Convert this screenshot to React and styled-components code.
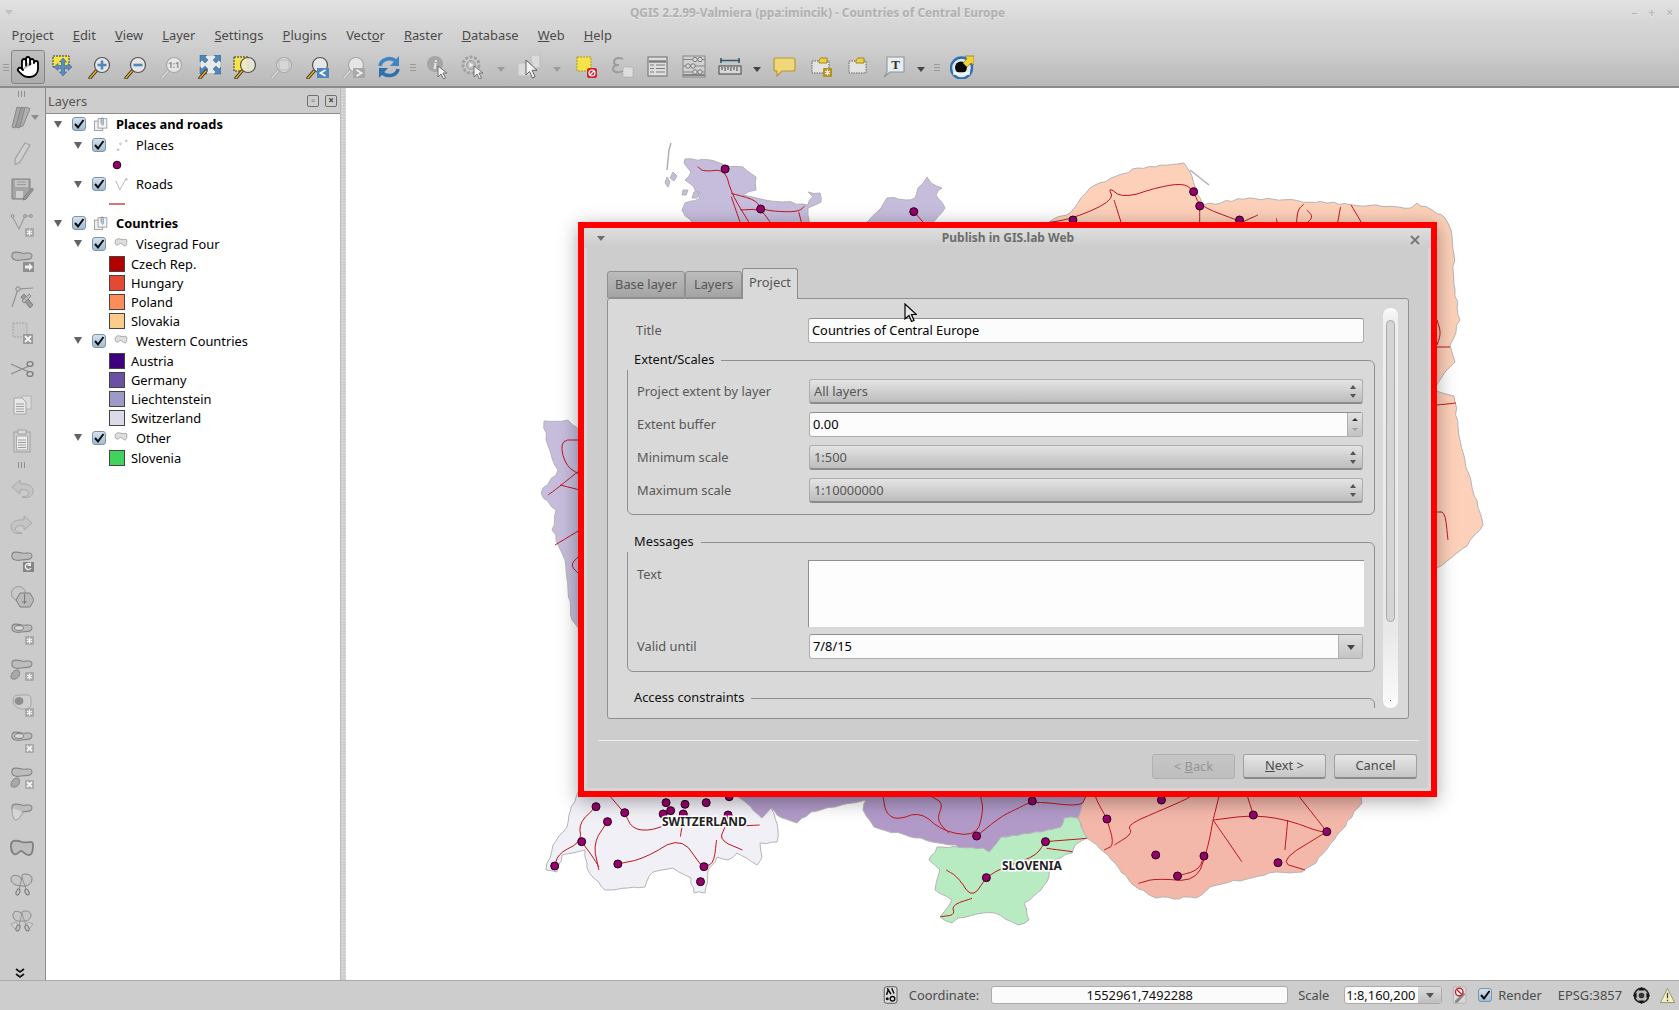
import React from "react"
import styled, { createGlobalStyle } from "styled-components"
import { Hand } from "lucide-react"

const GlobalStyle = createGlobalStyle`
  html, body { margin: 0; padding: 0; background: #fff; overflow: hidden; }
  body { font-family: "Noto Sans", "Open Sans", sans-serif; font-size: 12.85px; }
`

/* ---------- icons ---------- */
const Svg = styled.svg`
  width: ${(p) => p.$s || 24}px;
  height: ${(p) => p.$s || 24}px;
  display: block;
  flex: none;
`
const Icon = ({ s, children }) => <Svg $s={s} viewBox="0 0 24 24">{children}</Svg>

function SvgLabel({ children, fontFamily = "Noto Sans", ...rest }) {
  return (
    <text textAnchor="middle" fontFamily={fontFamily} {...rest}>
      {children}
    </text>
  )
}

const Lens = ({ dim, fill = "#e6e6e6" }) => (
  <>
    <line x1="9" y1="16" x2="3" y2="23" stroke={dim ? "#a8a8a8" : "#222"} strokeWidth="3.2" strokeLinecap="round" />
    <line x1="9" y1="16" x2="3" y2="23" stroke={dim ? "#dcdcdc" : "#f0b020"} strokeWidth="1.6" strokeLinecap="round" />
    <circle cx="15" cy="10" r="7.5" fill={fill} stroke={dim ? "#a8a8a8" : "#555"} strokeWidth="1.2" />
  </>
)
const Star = ({ x = 15, y = 15, bg = "#a9a9a9" }) => (
  <>
    <rect x={x} y={y} width="9" height="9" rx="1" fill={bg} />
    <path d={`M${x + 4.5} ${y + 1.5}v6M${x + 2} ${y + 3}l5 3M${x + 7} ${y + 3}l-5 3`} stroke="#f4f4f4" strokeWidth="1.2" />
  </>
)
const Cross = ({ x = 15, y = 15 }) => (
  <>
    <rect x={x} y={y} width="9" height="9" rx="1" fill="#a9a9a9" />
    <path d={`M${x + 2} ${y + 2}l5 5M${x + 7} ${y + 2}l-5 5`} stroke="#f4f4f4" strokeWidth="1.8" />
  </>
)
const Pointer = () => (
  <path d="M13 11l0 11 3-3 2.5 5 2-1-2.5-5 4 0z" fill="#f2f2f2" stroke="#666" strokeWidth="0.9" />
)
const Blob = ({ d = "M2 6C2 2 8 3 12 4S22 2 22 7 15 10 11 11 1 11 2 6Z" }) => (
  <path d={d} fill="#bdbdbd" stroke="#858585" strokeWidth="1.1" />
)

const icons = {
  panSel: (
    <>
      <rect x="2" y="1" width="16" height="11" fill="#f6e34a" stroke="#333" strokeWidth="1" strokeDasharray="2 1" />
      <path d="M12 3l3.5 4h-2v3.5h3.5v-2l4 3.5-4 3.5v-2h-3.5v3.5h2l-3.5 4-3.5-4h2v-3.5H7v2L3 12l4-3.5v2h3.5V7h-2z" fill="#5b8dbd" stroke="#37628c" strokeWidth="0.6" />
    </>
  ),
  zoomIn: (
    <>
      <Lens />
      <path d="M15 5.5v9M10.5 10h9" stroke="#4f86bb" strokeWidth="2.6" />
    </>
  ),
  zoomOut: (
    <>
      <Lens />
      <path d="M10.5 10h9" stroke="#4f86bb" strokeWidth="2.6" />
    </>
  ),
  zoomOne: (
    <>
      <Lens dim />
      <SvgLabel x="15" y="13" fill="#8b8b8b" fontSize="8" fontWeight="700">1:1</SvgLabel>
    </>
  ),
  zoomFull: (
    <>
      <rect x="4" y="1" width="19" height="17" fill="#e9e9e9" />
      <path d="M3 0h7L8 2l3 3-3 3-3-3-2 2zM24 0v7l-2-2-3 3-3-3 3-3-2-2zM24 19h-7l2-2-3-3 3-3 3 3 2-2zM3 19v-7l2 2 3-3 3 3-3 3 2 2z" fill="#4f86bb" stroke="#2f5f8c" strokeWidth="0.5" />
      <line x1="9" y1="16" x2="3" y2="23" stroke="#222" strokeWidth="3.2" strokeLinecap="round" />
      <line x1="9" y1="16" x2="3" y2="23" stroke="#f0b020" strokeWidth="1.6" strokeLinecap="round" />
    </>
  ),
  zoomSel: (
    <>
      <rect x="1" y="2" width="14" height="14" fill="#f6e34a" stroke="#333" strokeWidth="1" strokeDasharray="2 1" />
      <Lens fill="rgba(235,235,215,0.85)" />
    </>
  ),
  zoomLayer: (
    <>
      <Lens dim fill="rgba(230,230,230,0.85)" />
      <rect x="10" y="5" width="10" height="10" fill="#d6d6d6" stroke="#b5b5b5" />
    </>
  ),
  zoomLast: (
    <>
      <Lens />
      <rect x="12" y="13" width="12" height="10" fill="#4f86bb" />
      <path d="M20.5 15l-5 3 5 3" stroke="#fff" strokeWidth="1.8" fill="none" />
    </>
  ),
  zoomNext: (
    <>
      <Lens dim />
      <rect x="12" y="13" width="12" height="10" fill="#a8a8a8" />
      <path d="M15.5 15l5 3-5 3" stroke="#f0f0f0" strokeWidth="1.8" fill="none" />
    </>
  ),
  refresh: (
    <>
      <path d="M3 11C4 5 12 1 19 6" stroke="#3f85c4" strokeWidth="3.6" fill="none" />
      <path d="M22 1v10H13z" fill="#3f85c4" />
      <path d="M21 14C20 20 12 23 5 18" stroke="#2f6fae" strokeWidth="3.6" fill="none" />
      <path d="M2 23V13h9z" fill="#2f6fae" />
    </>
  ),
  identify: (
    <>
      <circle cx="10" cy="9" r="8" fill="#a5a5a5" />
      <SvgLabel x="10" y="14" fill="#eee" fontSize="13" fontWeight="700" fontStyle="italic" fontFamily="Liberation Serif">i</SvgLabel>
      <Pointer />
    </>
  ),
  action: (
    <>
      <circle cx="10" cy="10" r="8" fill="#cfcfcf" stroke="#a0a0a0" strokeWidth="3" strokeDasharray="3 1.5" />
      <circle cx="10" cy="10" r="4.5" fill="#bdbdbd" stroke="#999" />
      <path d="M8.5 7.5l4 2.5-4 2.5z" fill="#f0f0f0" />
      <Pointer />
    </>
  ),
  select: (
    <>
      <rect x="13" y="0" width="9" height="13" fill="#dadada" stroke="#bbb" />
      <rect x="0" y="8" width="14" height="13" fill="#dadada" stroke="#bbb" />
      <path d="M8 5l0 15 3.5-3.5 3 6.5 2.6-1.2-3-6.5 5 0z" fill="#f2f2f2" stroke="#555" strokeWidth="0.9" />
    </>
  ),
  deselect: (
    <>
      <rect x="3" y="2" width="14" height="14" fill="#f6e34a" stroke="#a89a20" strokeDasharray="2 1" />
      <rect x="13" y="13" width="10" height="10" rx="2" fill="#d4202a" />
      <circle cx="18" cy="18" r="3" fill="none" stroke="#fff" strokeWidth="1.2" />
      <path d="M16 20l4-4" stroke="#fff" strokeWidth="1.2" />
    </>
  ),
  expression: (
    <>
      <path d="M13 4C9 2 4 3 4 7c0 2 2 3 5 3-4 0-6 1-6 4 0 4 6 4 10 2" fill="none" stroke="#9a9a9a" strokeWidth="1.9" />
      <rect x="13" y="12" width="10" height="10" fill="#dedede" stroke="#aaa" strokeDasharray="1.5 1" />
    </>
  ),
  table: (
    <>
      <rect x="2" y="2" width="19" height="19" fill="#dedede" stroke="#7c7c7c" strokeWidth="1.2" />
      <path d="M3 6.5h17" stroke="#7c7c7c" strokeWidth="2.4" />
      <path d="M4 10h4M10 10h9M4 13.5h4M10 13.5h9M4 17h4M10 17h9" stroke="#7c7c7c" strokeWidth="1.1" />
    </>
  ),
  stats: (
    <>
      <rect x="1" y="1" width="22" height="21" fill="#d0d0d0" stroke="#858585" />
      <path d="M1 20h22" stroke="#858585" strokeWidth="2" />
      <path d="M1 4.5h22M1 11h22M1 17h22" stroke="#858585" />
      <circle cx="13" cy="4.5" r="2.2" fill="#ddd" stroke="#777" />
      <circle cx="18" cy="4.5" r="2.2" fill="#ddd" stroke="#777" />
      <circle cx="6" cy="11" r="2.2" fill="#ddd" stroke="#777" />
      <circle cx="11" cy="11" r="2.2" fill="#ddd" stroke="#777" />
      <circle cx="13" cy="17" r="2.2" fill="#ddd" stroke="#777" />
      <circle cx="18" cy="17" r="2.2" fill="#ddd" stroke="#777" />
    </>
  ),
  measure: (
    <>
      <path d="M2 5.5h20M3 3v5M21 3v5" stroke="#31566f" strokeWidth="1.5" />
      <rect x="1" y="11" width="22" height="8" fill="#d8d8d8" stroke="#444" />
      <path d="M4 12v3M7 12v4M10 12v3M13 12v4M16 12v3M19 12v4" stroke="#444" />
    </>
  ),
  tips: (
    <path d="M4 3h17q2 0 2 2v9q0 2-2 2H10l-5 5v-5H4q-2 0-2-2V5q0-2 2-2z" fill="#f0d878" stroke="#b89a30" strokeWidth="1.2" />
  ),
  annotNew: (
    <>
      <rect x="2" y="6" width="17" height="12" fill="#e3e3e3" stroke="#666" strokeDasharray="1.5 1" />
      <path d="M11 3h6v5h-8V5z" fill="#f0d040" stroke="#a08820" />
      <Star x={13} y={13} bg="#b8901c" />
    </>
  ),
  annotMove: (
    <>
      <rect x="3" y="6" width="17" height="12" fill="#e3e3e3" stroke="#666" strokeDasharray="1.5 1" />
      <path d="M12 3h6v5h-8V5z" fill="#f0d040" stroke="#a08820" />
    </>
  ),
  textAnnot: (
    <>
      <path d="M5 2h17v15H8l-6 5 3-5z" fill="#e6ecef" stroke="#8a979d" strokeWidth="1.1" />
      <SvgLabel x="13.5" y="14" fill="#333" fontSize="13" fontFamily="Liberation Serif" fontWeight="700">T</SvgLabel>
    </>
  ),
  gislab: (
    <>
      <circle cx="11.5" cy="13" r="10.5" fill="#dfe9f2" stroke="#2f6fb0" strokeWidth="2.4" />
      <circle cx="11" cy="12.5" r="6" fill="#0a0a0a" />
      <rect x="3" y="17" width="17" height="3" fill="#fff" opacity="0.7" />
      <path d="M15 1h9v9l-3-2-4 4-4-4 4-4z" fill="#f2d23c" stroke="#8a7416" strokeWidth="0.7" />
    </>
  ),

  /* side toolbar */
  pencils: (
    <>
      <path d="M7 2l5 1.5L5 23 2 22z" fill="#a8a8a8" stroke="#8a8a8a" />
      <path d="M11 2l5 1.5L9 23 6 22z" fill="#a0a0a0" stroke="#848484" />
      <path d="M15 2l5 1.5L13 21 10 22z" fill="#b0b0b0" stroke="#8a8a8a" />
    </>
  ),
  pencil: <path d="M15 2l5 2-10 17-5 3 0-6z" fill="#cfcfcf" stroke="#a2a2a2" strokeWidth="1.2" />,
  save: (
    <>
      <path d="M2 2h18v14l-4 6H2z" fill="#a5a5a5" stroke="#808080" />
      <rect x="5" y="3" width="13" height="7" fill="#c4c4c4" />
      <path d="M7 5h9M7 7.5h9" stroke="#999" />
      <rect x="6" y="14" width="7" height="7" fill="#cfcfcf" />
      <path d="M22 11l1.5 1.5L16 22l-3 1 1-3z" fill="#999" stroke="#777" strokeWidth="0.8" />
    </>
  ),
  vertex: (
    <>
      <path d="M2 3l7 13L15 3l6 0" stroke="#9a9a9a" strokeWidth="1.1" fill="none" />
      <circle cx="2.5" cy="3" r="1.4" fill="#d4d4d4" stroke="#888" />
      <circle cx="15" cy="3" r="1.4" fill="#d4d4d4" stroke="#888" />
      <circle cx="21" cy="3" r="1.4" fill="#d4d4d4" stroke="#888" />
      <Star />
    </>
  ),
  moveFeat: (
    <>
      <Blob />
      <rect x="13" y="13" width="11" height="10" fill="#8f8f8f" />
      <path d="M15 16.5h4v-2.5l4 4-4 4v-2.5h-4z" fill="#f0f0f0" />
    </>
  ),
  nodeTool: (
    <>
      <path d="M2 22L8 4l15-1" stroke="#8f8f8f" strokeWidth="1.1" fill="none" />
      <circle cx="8" cy="4" r="2.2" fill="#c9c9c9" stroke="#888" />
      <path d="M11 12l3-3 9 11-3 3z" fill="#9c9c9c" stroke="#808080" />
      <path d="M12 16l7-7 2 2-7 7z" fill="#bbb" stroke="#8c8c8c" />
    </>
  ),
  deleteSel: (
    <>
      <rect x="3" y="2" width="14" height="14" fill="#c8c8c8" stroke="#a4a4a4" strokeDasharray="2 1" />
      <rect x="13" y="13" width="10" height="10" fill="#999" />
      <path d="M15 15l6 6M21 15l-6 6" stroke="#f4f4f4" strokeWidth="2" />
    </>
  ),
  scissors: (
    <>
      <path d="M1 7l18 8M1 17l18-8" stroke="#8a8a8a" strokeWidth="1.2" />
      <ellipse cx="20" cy="7" rx="3" ry="2.4" fill="none" stroke="#808080" strokeWidth="1.4" />
      <ellipse cx="20" cy="17" rx="3" ry="2.4" fill="none" stroke="#808080" strokeWidth="1.4" />
    </>
  ),
  copy: (
    <>
      <rect x="12" y="3" width="9" height="13" fill="#dcdcdc" stroke="#b4b4b4" />
      <path d="M4 5h8l4 4v12H4z" fill="#e8e8e8" stroke="#a6a6a6" />
      <path d="M6 11h8M6 13.5h8M6 16h8M6 18.5h8" stroke="#a0a0a0" />
    </>
  ),
  paste: (
    <>
      <rect x="4" y="3" width="16" height="20" fill="#d0d0d0" stroke="#a0a0a0" />
      <rect x="6.5" y="7" width="11" height="14" fill="#ececec" stroke="#aaa" />
      <rect x="8" y="1" width="8" height="4" fill="#ddd" stroke="#a0a0a0" />
      <path d="M8 11h8M8 13.5h8M8 16h8M8 18.5h8" stroke="#9c9c9c" />
    </>
  ),
  undo: (
    <path d="M10 3L2 10l8 7v-4c5-1 8 0 9 3-1 3-4 4-7 4 6 2 11-1 11-6s-6-8-13-7z" fill="#c4c4c4" stroke="#a8a8a8" />
  ),
  redo: (
    <path d="M14 3l8 7-8 7v-4c-5-1-8 0-9 3 1 3 4 4 7 4-6 2-11-1-11-6s6-8 13-7z" fill="#c4c4c4" stroke="#a8a8a8" />
  ),
  rotate: (
    <>
      <Blob />
      <rect x="13" y="13" width="11" height="10" fill="#858585" />
      <path d="M21 19a3 3 0 1 1-1-4" stroke="#f0f0f0" strokeWidth="1.3" fill="none" />
      <path d="M21 13v4h-4z" fill="#f0f0f0" />
    </>
  ),
  offset: (
    <>
      <circle cx="8.5" cy="8.5" r="7" fill="#c9c9c9" stroke="#979797" />
      <path d="M10 8h10l4 7-4 7H10l-4-7z" fill="#b9b9b9" stroke="#7f7f7f" />
      <path d="M14.5 9v9M12.5 16l2 2.5 2-2.5" stroke="#777" fill="none" />
    </>
  ),
  ring: (
    <>
      <Blob />
      <ellipse cx="9" cy="7" rx="4.5" ry="2.4" fill="#dadada" stroke="#7d7d7d" />
      <Star />
    </>
  ),
  part: (
    <>
      <Blob />
      <path d="M1 20c0-4 3-7 6-7s3 3 2 6-8 5-8 1z" fill="#a8a8a8" stroke="#858585" />
      <Star />
    </>
  ),
  fill: (
    <>
      <path d="M3 7c0-5 5-5 9-5s9-1 9 4 1 9-5 10-13-2-13-9z" fill="#cfcfcf" stroke="#a4a4a4" />
      <ellipse cx="9" cy="8" rx="4.5" ry="4" fill="#8f8f8f" />
      <Star />
    </>
  ),
  ringDel: (
    <>
      <Blob />
      <ellipse cx="9" cy="7" rx="4.5" ry="2.4" fill="#dadada" stroke="#7d7d7d" />
      <Cross />
    </>
  ),
  partDel: (
    <>
      <Blob />
      <path d="M1 20c0-4 3-7 6-7s3 3 2 6-8 5-8 1z" fill="#a8a8a8" stroke="#858585" />
      <Cross />
    </>
  ),
  reshape: (
    <>
      <Blob />
      <path d="M2 7c0 6 1 12 4 12s6-6 7-8" fill="#d5d5d5" stroke="#9c9c9c" />
    </>
  ),
  simplify: (
    <path d="M1 8C1 3 6 3 12 5S23 2 23 8s-1 11-5 10-5-4-7-4-4 5-7 3-3-5-3-9z" fill="#bdbdbd" stroke="#808080" strokeWidth="1.8" />
  ),
  split: (
    <>
      <path d="M1 6c0-5 7-4 9-2l2 3V2c3-2 10-1 10 4s-5 8-10 7C7 13 1 11 1 6z" fill="#c6c6c6" stroke="#858585" />
      <path d="M12 5l-3 11M12 5l4 11" stroke="#8f8f8f" />
      <ellipse cx="8" cy="19" rx="1.8" ry="3.2" fill="#c6c6c6" stroke="#777" transform="rotate(20 8 19)" />
      <ellipse cx="17" cy="19" rx="1.8" ry="3.2" fill="#c6c6c6" stroke="#777" transform="rotate(-25 17 19)" />
    </>
  ),
  splitParts: (
    <>
      <path d="M3 6c0-5 6-4 8-2l1 3V3c3-2 9-1 9 3s-4 7-9 6C7 13 3 11 3 6z" fill="#c6c6c6" stroke="#8a8a8a" />
      <path d="M1 15l5-2 2 4-3 3zM23 15l-5-2-2 4 3 3z" fill="#d0d0d0" stroke="#a6a6a6" />
      <path d="M12 5l-3 11M12 5l4 11" stroke="#999" />
      <ellipse cx="8" cy="19" rx="1.8" ry="3.2" fill="#c6c6c6" stroke="#777" transform="rotate(20 8 19)" />
      <ellipse cx="17" cy="19" rx="1.8" ry="3.2" fill="#c6c6c6" stroke="#777" transform="rotate(-25 17 19)" />
    </>
  ),

  /* status bar */
  messages: (
    <>
      <rect x="3" y="1" width="17" height="22" rx="3" fill="#ddd" stroke="#333" />
      <path d="M7 3l5 8M13 3l3 7M6 12l2-6" stroke="#111" strokeWidth="2" />
      <circle cx="14" cy="17" r="3" fill="#eee" stroke="#111" strokeWidth="2" />
      <circle cx="7" cy="17" r="2" fill="#111" />
    </>
  ),
  noRender: (
    <>
      <rect x="3" y="1" width="17" height="22" rx="2" fill="#d8d8d8" stroke="#aaa" />
      <path d="M17 9l2 2-10 11-4 1 1-4z" fill="#888" />
      <circle cx="11" cy="8" r="5" fill="#fff" stroke="#cf1f2a" strokeWidth="1.8" />
      <path d="M8 5l6 6" stroke="#cf1f2a" strokeWidth="1.8" />
    </>
  ),
  globe: (
    <>
      <circle cx="12" cy="12" r="10" fill="#bcbcbc" stroke="#222" strokeWidth="2.4" />
      <path d="M12 0l4 5H8zM12 24l-4-5h8zM0 12l5-4v8zM24 12l-5 4V8z" fill="#111" />
      <circle cx="12" cy="12" r="4" fill="#333" />
    </>
  ),
  warning: (
    <>
      <path d="M12 2l10 20H2z" fill="#f3efc0" stroke="#8c8a5c" strokeWidth="1.2" />
      <path d="M12 8v8M12 18v2" stroke="#444" strokeWidth="1.8" />
    </>
  ),

  /* layer tree */
  group: (
    <>
      <rect x="1" y="7" width="14" height="16" fill="#efefef" stroke="#8a8a8a" strokeWidth="1.3" />
      <rect x="7" y="3" width="15" height="16" fill="#f5f5f5" stroke="#8a8a8a" strokeWidth="1.3" />
      <path d="M12 11V3.5a2 2 0 0 1 4 0V13a1.2 1.2 0 0 1-2.4 0V5" stroke="#5f7f9c" fill="none" strokeWidth="1.2" />
    </>
  ),
  points: (
    <>
      <circle cx="7" cy="20" r="1.6" fill="#eee" stroke="#888" strokeWidth="0.8" />
      <circle cx="11" cy="10" r="1.6" fill="#eee" stroke="#888" strokeWidth="0.8" />
      <circle cx="21" cy="5" r="1.6" fill="#eee" stroke="#888" strokeWidth="0.8" />
    </>
  ),
  line: (
    <>
      <path d="M3 6l7 16L20 4l3 0" stroke="#a8a8a8" fill="none" strokeWidth="1.4" />
      <circle cx="21" cy="4" r="1.5" fill="#eee" stroke="#888" strokeWidth="0.8" />
    </>
  ),
  polygon: (
    <path d="M2 9c0-6 5-7 10-5s10-3 10 3-1 9-4 8-5-4-7-4-4 4-6 3-3-2-3-5z" fill="#dedede" stroke="#a4a4a4" strokeWidth="1.6" />
  ),
}

/* ---------- shell ---------- */
const Root = styled.div`
  position: relative;
  width: 1679px;
  height: 1010px;
  display: flex;
  flex-direction: column;
  overflow: hidden;
  background: #cdcdcd;
`
const Header = styled.header`
  height: 88px;
  flex: none;
  box-sizing: border-box;
  border-bottom: 2px solid #8b8b8b;
  background: linear-gradient(#e2e2e2 0, #d6d6d6 24px, #cecece 48px, #b9b9b9 86px);
`
const WindowTitle = styled.div`
  height: 24px;
  padding-right: 44px;
  display: flex;
  align-items: center;
  justify-content: center;
  position: relative;
  font-size: 11.85px;
  font-weight: 700;
  color: #b0b0b0;
  text-shadow: 0 1px 0 #e8e8e8;
`
const TitleArrow = styled.span`
  position: absolute;
  left: 5px;
  top: 10px;
  border: 4px solid transparent;
  border-top: 5px solid #c2c2c2;
`
const TitleControls = styled.div`
  position: absolute;
  right: 6px;
  top: 4px;
  display: flex;
  gap: 11px;
  font-size: 12px;
  color: #bbb;
`
const MenuBar = styled.nav`
  height: 24px;
  padding: 0 0 2px 2px;
  box-sizing: border-box;
  display: flex;
  align-items: center;
`
const MenuItem = styled.span`
  padding: 0 9.6px;
  color: #4a4a4a;
  & u { text-underline-offset: 1px; }
`
const MainToolbar = styled.div`
  height: 38px;
  padding: 2px 0 0 0;
  display: flex;
  align-items: flex-start;
`
const Grip = styled.div`
  width: ${(p) => p.$w || 11}px;
  height: 34px;
  flex: none;
  display: flex;
  flex-direction: column;
  align-items: center;
  justify-content: center;
  gap: 2px;
  & i { width: 6px; height: 1px; background: #9a9a9a; display: block; }
`
const ToolButton = styled.div`
  width: ${(p) => p.$w || 36}px;
  height: 34px;
  flex: none;
  display: flex;
  align-items: center;
  justify-content: center;
  box-sizing: border-box;
  ${(p) =>
    p.$active &&
    `background: linear-gradient(#c0c0c0, #adadad);
     border: 1px solid #858585;
     border-radius: 3px;`}
`
const DropArrow = styled.span`
  width: ${(p) => p.$w || 18}px;
  flex: none;
  height: 34px;
  display: flex;
  align-items: center;
  justify-content: center;
  &::after {
    content: "";
    margin-top: 4px;
    border: 4px solid transparent;
    border-top: 5px solid ${(p) => (p.$dark ? "#444" : "#9c9c9c")};
    border-bottom: 0;
  }
`
const Spacer = styled.div`
  width: ${(p) => p.$w}px;
  flex: none;
`
const Middle = styled.div`
  flex: 1;
  min-height: 0;
  display: flex;
`

/* ---------- side toolbar ---------- */
const SideBar = styled.aside`
  width: 46px;
  flex: none;
  box-sizing: border-box;
  border-right: 1px solid #8c8c8c;
  display: flex;
  flex-direction: column;
  background: #cbcbcb;
`
const SideGrip = styled.div`
  height: ${(p) => p.$h}px;
  flex: none;
  display: flex;
  justify-content: center;
  align-items: center;
  gap: 2px;
  padding-right: 2px;
  & i { width: 1px; height: 6px; background: #8f8f8f; display: block; }
`
const SideButton = styled.div`
  height: 36px;
  flex: none;
  display: flex;
  align-items: center;
  justify-content: center;
  position: relative;
  padding-right: 1px;
`
const SideDrop = styled.span`
  position: absolute;
  left: 31px;
  top: 16px;
  border: 4px solid transparent;
  border-top: 5px solid #8c8c8c;
  border-bottom: 0;
`
const Chevrons = styled.div`
  margin-top: auto;
  height: 12px;
  display: flex;
  justify-content: center;
  padding-right: 5px;
`

/* ---------- layers dock ---------- */
const Dock = styled.section`
  width: 294px;
  flex: none;
  display: flex;
  flex-direction: column;
`
const DockHead = styled.div`
  height: 25px;
  flex: none;
  padding: 0 3px 0 2px;
  display: flex;
  align-items: center;
  color: #555;
`
const DockTitle = styled.span`
  flex: 1;
`
const DockBtn = styled.span`
  width: 10px;
  height: 10px;
  margin-left: 6px;
  border: 1px solid #6e6e6e;
  border-radius: 2px;
  flex: none;
  position: relative;
  font-size: 10px;
  line-height: 9px;
  text-align: center;
  font-weight: 700;
  color: #444;
`
const Tree = styled.div`
  flex: 1;
  background: #fff;
  border-top: 1px solid #8c8c8c;
  color: #000;
`
const TreeRow = styled.div`
  height: ${(p) => p.$h}px;
  padding-left: ${(p) => p.$pad + 1}px;
  display: flex;
  align-items: center;
  font-weight: ${(p) => (p.$bold ? 700 : 400)};
`
const Expander = styled.span`
  flex: none;
  margin-right: 10px;
  width: 0;
  border-left: 4px solid transparent;
  border-right: 4px solid transparent;
  border-top: 7px solid #636363;
`
const Check = styled.span`
  width: 14px;
  height: 14px;
  flex: none;
  margin-right: ${(p) => p.$mr ?? 8}px;
  box-sizing: border-box;
  border: 1px solid #7f93a6;
  border-radius: 3px;
  background: linear-gradient(#d3e2ef, #9fbcd4);
  display: flex;
  align-items: center;
  justify-content: center;
`
const NodeIcon = styled.span`
  margin-right: 8px;
  flex: none;
`
const Swatch = styled.span`
  width: 16px;
  height: 16px;
  flex: none;
  box-sizing: border-box;
  margin-right: 6px;
  border: 1px solid #444;
  background: ${(p) => p.$c};
`
const Splitter = styled.div`
  width: 6px;
  flex: none;
  background-image: radial-gradient(#eee 1px, transparent 1px);
  background-size: 3px 3px;
  border-left: 1px solid #bcbcbc;
  box-sizing: border-box;
`
const MapCanvas = styled.main`
  flex: 1;
  background: #fff;
  overflow: hidden;
  & > svg { display: block; }
`

/* ---------- status bar ---------- */
const StatusBar = styled.footer`
  height: 30px;
  flex: none;
  box-sizing: border-box;
  border-top: 1px solid #aaa;
  background: #cdcdcd;
  display: flex;
  justify-content: flex-end;
  align-items: center;
  padding: 0 3px 1px 0;
  color: #4c4c4c;
`
const StatusText = styled.span`
  margin-left: ${(p) => p.$ml || 0}px;
  padding-bottom: 1px;
`
const CoordBox = styled.div`
  width: 297px;
  height: 18px;
  margin-left: ${(p) => p.$ml || 0}px;
  box-sizing: border-box;
  background: #fbfbfb;
  border: 1px solid #aaa;
  border-radius: 3px;
  text-align: center;
  line-height: 16px;
  color: #111;
`
const ScaleCombo = styled.div`
  width: 98px;
  height: 18px;
  margin-left: ${(p) => p.$ml || 0}px;
  box-sizing: border-box;
  border: 1px solid #aaa;
  border-radius: 3px;
  display: flex;
  color: #111;
  background: #fbfbfb;
  line-height: 16px;
  overflow: hidden;
  & > span:first-child { width: 73px; padding-left: 1px; box-sizing: border-box; }
`
const ScaleBtn = styled.span`
  flex: 1;
  background: linear-gradient(#dcdcdc, #bfbfbf);
  display: flex;
  align-items: center;
  justify-content: center;
  &::after {
    content: "";
    border: 4px solid transparent;
    border-top: 5px solid #555;
    border-bottom: 0;
  }
`
const StatusIcon = styled.span`
  margin-left: ${(p) => p.$ml || 0}px;
  flex: none;
`

/* ---------- dialog ---------- */
const Dialog = styled.div`
  position: absolute;
  left: 578px;
  top: 222px;
  width: 859px;
  height: 575px;
  box-sizing: border-box;
  border: 6px solid #ff0000;
  display: flex;
  flex-direction: column;
  box-shadow: 0 4px 18px rgba(0, 0, 0, 0.35);
`
const DialogTitle = styled.div`
  height: 20px;
  flex: none;
  position: relative;
  padding: 0 0 2px 1px;
  box-sizing: border-box;
  display: flex;
  align-items: center;
  justify-content: center;
  background: linear-gradient(#dedede, #cccccc);
  font-size: 12px;
  font-weight: 700;
  color: #6c6c6c;
`
const DialogArrow = styled.span`
  position: absolute;
  left: 13px;
  top: 8px;
  border: 4px solid transparent;
  border-top: 5px solid #6c6c6c;
  border-bottom: 0;
`
const DialogClose = styled.span`
  position: absolute;
  right: 11px;
  top: 4px;
`
const DialogBody = styled.div`
  flex: 1;
  min-height: 0;
  box-sizing: border-box;
  border: 3px solid #d6d6d6;
  border-top: 0;
  background: #cdcdcd;
  padding: 20px 19px 0 20px;
  display: flex;
  flex-direction: column;
`
const TabBar = styled.div`
  height: 30px;
  flex: none;
  display: flex;
  align-items: flex-end;
  position: relative;
  z-index: 1;
`
const Tab = styled.div`
  width: ${(p) => p.$w}px;
  height: ${(p) => (p.$active ? 31 : 27)}px;
  margin-bottom: ${(p) => (p.$active ? -1 : 0)}px;
  box-sizing: border-box;
  padding-top: ${(p) => (p.$active ? 4 : 3)}px;
  text-align: center;
  color: #565656;
  border: 1px solid #8f8f8f;
  border-bottom: ${(p) => (p.$active ? "0" : "1px solid #8f8f8f")};
  border-radius: 3px 3px 0 0;
  background: ${(p) => (p.$active ? "#d9d9d9" : "linear-gradient(#bcbcbc, #a4a4a4)")};
`
const Pane = styled.div`
  height: 421px;
  flex: none;
  box-sizing: border-box;
  border: 1px solid #8f8f8f;
  border-radius: 3px;
  background: #d9d9d9;
  padding: 9px 10px 0 19px;
  display: flex;
`
const FormArea = styled.div`
  width: 748px;
  height: 400px;
  flex: none;
  overflow: hidden;
  padding-top: 10px;
  box-sizing: border-box;
`
const Row = styled.div`
  height: ${(p) => p.$h || 25}px;
  display: flex;
  align-items: center;
  margin-top: ${(p) => p.$mt || 0}px;
  padding-left: ${(p) => p.$pad || 0}px;
`
const FieldLabel = styled.label`
  width: ${(p) => p.$w || 172}px;
  flex: none;
  color: #585858;
  align-self: ${(p) => (p.$top ? "flex-start" : "center")};
  padding: ${(p) => (p.$top ? "5px 0 0" : "0 0 2px")};
`
const TextField = styled.div`
  height: 25px;
  width: ${(p) => p.$w}px;
  flex: none;
  box-sizing: border-box;
  padding-left: 3px;
  background: #fcfcfc;
  border: 1px solid #adadad;
  border-top-color: #8f8f8f;
  border-radius: 3px;
  line-height: 23px;
  color: #000;
`
const GroupBox = styled.section`
  position: relative;
  box-sizing: border-box;
  margin-top: ${(p) => p.$mt}px;
  border: 1px solid #8f8f8f;
  border-radius: 6px;
  padding: ${(p) => p.$pt}px 10px ${(p) => p.$pb}px 9px;
  min-height: ${(p) => p.$minH || 0}px;
`
const Legend = styled.div`
  position: absolute;
  left: -1px;
  top: -10px;
  height: 19px;
  line-height: 17px;
  padding: 0 7px;
  background: #d9d9d9;
  color: #111;
`
const Fields = styled.div`
  display: flex;
  flex-direction: column;
  gap: ${(p) => p.$gap}px;
`
const Combo = styled.div`
  width: 554px;
  height: 25px;
  flex: none;
  box-sizing: border-box;
  padding: 0 0 0 4px;
  background: linear-gradient(#e4e4e4, #bdbdbd);
  border: 1px solid #adadad;
  border-bottom: 2px solid #8c8c8c;
  border-radius: 3px;
  color: #565656;
  line-height: 22px;
  display: flex;
  justify-content: space-between;
`
const UpDown = styled.span`
  width: 16px;
  height: 100%;
  flex: none;
  display: flex;
  flex-direction: column;
  align-items: center;
  justify-content: center;
  gap: 5px;
  margin-right: 1px;
  &::before, &::after {
    content: "";
    border: 3px solid transparent;
  }
  &::before { border-bottom: 4px solid #555; border-top: 0; }
  &::after { border-top: 4px solid #555; border-bottom: 0; }
`
const FieldWithButton = styled.div`
  width: 554px;
  height: 25px;
  flex: none;
  box-sizing: border-box;
  background: #fcfcfc;
  border: 1px solid #adadad;
  border-top-color: #8f8f8f;
  border-radius: 3px;
  color: #000;
  display: flex;
  line-height: 23px;
  overflow: hidden;
  & > span:first-child { flex: 1; padding-left: 3px; }
`
const SpinButton = styled.span`
  width: 14px;
  flex: none;
  background: linear-gradient(#e2e2e2, #c2c2c2);
  border-left: 1px solid #b0b0b0;
  display: flex;
  flex-direction: column;
  align-items: center;
  justify-content: center;
  gap: 7px;
  &::before, &::after {
    content: "";
    border: 3px solid transparent;
  }
  &::before { border-bottom: 3px solid #333; border-top: 0; }
  &::after { border-top: 3px solid #a0a0a0; border-bottom: 0; }
`
const DateButton = styled.span`
  width: 23px;
  flex: none;
  background: linear-gradient(#dedede, #c4c4c4);
  border-left: 1px solid #b0b0b0;
  display: flex;
  align-items: center;
  justify-content: center;
  &::after {
    content: "";
    margin-top: 2px;
    border: 4px solid transparent;
    border-top: 5px solid #444;
    border-bottom: 0;
  }
`
const TextArea = styled.div`
  width: 556px;
  height: 67px;
  flex: none;
  margin-left: -1px;
  box-sizing: border-box;
  background: #fdfdfd;
  border-top: 1px solid #8f8f8f;
  border-left: 1px solid #8f8f8f;
`
const ScrollTrack = styled.div`
  position: relative;
  width: 15px;
  height: 400px;
  flex: none;
  margin-left: 8px;
  box-sizing: border-box;
  padding: 12px 3px 0;
  background: linear-gradient(#fbfbfb, #efefef 12px, #e8e8e8 320px, #fbfbfb);
  border-radius: 7px;
  &::after {
    content: "";
    position: absolute;
    left: 7px;
    bottom: 7px;
    width: 1px;
    height: 1px;
    background: #555;
  }
`
const ScrollThumb = styled.div`
  height: 302px;
  box-sizing: border-box;
  background: #d5d5d5;
  border: 1px solid #a9a9a9;
  border-radius: 5px;
`
const Separator = styled.div`
  height: 1px;
  flex: none;
  margin: 21px -10px 0 -9px;
  background: #efefef;
`
const ButtonRow = styled.div`
  display: flex;
  justify-content: flex-end;
  gap: 8px;
  margin: 13px -8px 0 0;
`
const PushButton = styled.button`
  width: 83px;
  height: 25px;
  box-sizing: border-box;
  padding: 0 0 2px;
  font: inherit;
  border-radius: 3px;
  color: ${(p) => (p.disabled ? "#959595" : "#4a4a4a")};
  border: 1px solid ${(p) => (p.disabled ? "#b0b0b0" : "#a0a0a0")};
  border-bottom: ${(p) => (p.disabled ? "1px solid #b0b0b0" : "2px solid #8a8a8a")};
  background: ${(p) => (p.disabled ? "linear-gradient(#c6c6c6, #bebebe)" : "linear-gradient(#e6e6e6, #c6c6c6)")};
`
const Cursor = styled.svg`
  position: absolute;
  left: 904px;
  top: 303px;
  width: 13px;
  height: 19px;
`

/* ---------- map traced from the picture ---------- */
const MapLabel = styled.text`
  font-family: "Noto Sans", sans-serif;
  font-size: 12px;
  font-weight: 700;
  fill: #222;
  stroke: #fff;
  stroke-width: 3px;
  paint-order: stroke;
`

const z10 = (pts) => pts.map(([X, Y]) => [530 + X / 1.742, 790 + Y / 3])
const z11 = (pts) => pts.map(([X, Y]) => [520 + X / 1.633, 130 + Y / 3])
const parse = (s) => s.split(" ").map((p) => p.split(",").map(Number))
const join = (pts) => pts.map(([x, y]) => `${x.toFixed(1)},${y.toFixed(1)}`).join(" ")

// same point always gets the same offset, so shared borders stay together
const noise = (x, y) => {
  const v = Math.sin(Math.round(x) * 12.9898 + Math.round(y) * 78.233) * 43758.5453
  return v - Math.floor(v) - 0.5
}
// coastline look: cut long edges in short pieces and shake them
const rough = (s, amp = 2.4) => {
  const pts = parse(s)
  const out = []
  pts.forEach((a, i) => {
    const b = pts[(i + 1) % pts.length]
    const n = Math.max(1, Math.round(Math.hypot(b[0] - a[0], b[1] - a[1]) / 6))
    for (let k = 0; k < n; k++) {
      const x = a[0] + ((b[0] - a[0]) * k) / n
      const y = a[1] + ((b[1] - a[1]) * k) / n
      out.push(k === 0 ? [x, y] : [x + noise(x, y) * amp, y + noise(y, x) * amp])
    }
  })
  return join(out)
}
// rounds off road corners
const smooth = (pts, rounds = 2) => {
  let p = pts
  for (let r = 0; r < rounds; r++) {
    const next = [p[0]]
    for (let i = 0; i < p.length - 1; i++) {
      const [ax, ay] = p[i]
      const [bx, by] = p[i + 1]
      next.push([ax * 0.75 + bx * 0.25, ay * 0.75 + by * 0.25], [ax * 0.25 + bx * 0.75, ay * 0.25 + by * 0.75])
    }
    next.push(p[p.length - 1])
    p = next
  }
  return join(p)
}

const countries = [
  {
    c: "#c6bcdc",
    pts: "685,159 710,160 725,165 743,167 756,177 756,190 743,195 765,200 783,202 808,205 813,197 808,192 820,193 821,202 808,208 811,225 694,225 682,210 685,203 700,198 694,187 685,180 691,172 684,163",
  },
  {
    c: "#c6bcdc",
    pts: "863,225 881,208 887,198 906,200 915,198 918,188 927,177 931,183 942,188 936,195 945,208 930,225",
  },
  { c: "#c6bcdc", pts: "673,172 677,176 674,181 670,178" },
  { c: "#c6bcdc", pts: "667,177 670,182 668,187 665,183" },
  { c: "#c6bcdc", pts: "683,190 688,190 686,195 682,195" },
  { c: "#c6bcdc", pts: "694,192 700,192 697,198 692,198" },
  {
    c: "#c6bcdc",
    pts: "544,421 568,420 580,432 580,630 572,620 568,590 565,560 552,530 556,510 541,493 558,470 546,440",
  },
  {
    c: "#fdd0b9",
    pts: "1043,225 1071,212 1090,188 1111,178 1138,168 1184,163 1190,172 1197,193 1203,205 1249,198 1411,208 1417,203 1432,210 1445,218 1451,230 1453,250 1455,290 1460,320 1450,345 1455,362 1445,372 1436,386 1436,391 1454,396 1458,428 1465,460 1483,525 1467,546 1437,568 1400,600 1100,600",
  },
  {
    c: "#f2f0f7",
    pts: "579,790 570,812 567,827 553,845 546,870 557,872 562,855 585,850 587,868 605,890 645,887 653,872 673,868 691,878 694,893 705,893 708,870 717,857 728,860 737,853 757,865 762,857 760,843 777,842 778,830 771,808 762,818 751,807 737,790",
  },
  {
    c: "#b19ac8",
    pts: "731,790 751,807 762,818 771,808 777,815 797,823 811,812 866,800 863,810 874,827 932,842 989,852 1001,837 1041,832 1061,827 1064,818 1078,818 1090,807 1090,790",
  },
  {
    c: "#b8ebc2",
    pts: "1064,818 1078,818 1081,827 1087,838 1075,845 1072,853 1049,862 1049,877 1041,890 1024,903 1029,920 1018,925 995,913 983,913 958,918 952,923 940,917 952,900 935,890 940,870 929,860 937,847 983,848 989,852 1001,837 1041,832 1061,827",
  },
  {
    c: "#f4b8ab",
    pts: "1088,790 1078,818 1087,838 1104,852 1115,863 1133,885 1156,898 1196,898 1210,887 1276,872 1302,872 1316,863 1334,840 1362,803 1362,790",
  },
]

const roads = [
  ...[
    [[43, 228], [50, 190], [90, 155], [85, 100], [115, 50]],
    [[90, 155], [105, 190], [120, 230]],
    [[153, 222], [200, 205], [262, 140], [300, 230]],
    [[165, 70], [180, 120], [220, 120], [268, 75], [262, 140]],
    [[135, 95], [110, 160], [120, 240]],
    [[268, 75], [340, 110], [400, 105]],
    [[340, 110], [330, 150], [370, 180]],
    [[325, 150], [320, 220], [303, 230]],
    [[140, 20], [165, 70]],
    [[615, 20], [620, 70], [640, 90], [680, 65], [720, 125], [778, 138], [790, 60], [785, 20]],
    [[700, 20], [720, 40], [708, 90], [730, 130]],
    [[778, 138], [820, 80], [850, 55], [875, 33], [960, 50], [968, 20]],
    [[795, 263], [820, 235], [880, 200], [898, 155]],
    [[945, 185], [900, 175]],
    [[898, 155], [970, 145]],
    [[795, 263], [770, 325], [745, 260], [725, 240]],
    [[770, 325], [735, 345], [740, 375], [715, 380]],
    [[1005, 87], [990, 40], [985, 20]],
    [[1005, 87], [1018, 165], [1000, 180]],
    [[1018, 165], [1050, 130], [1040, 105], [1100, 60], [1140, 30], [1150, 20]],
    [[1190, 90], [1260, 75], [1320, 90], [1375, 125], [1388, 125]],
    [[1190, 90], [1180, 180], [1160, 275], [1090, 265], [1060, 280]],
    [[1190, 90], [1240, 215]],
    [[1200, 20], [1190, 90]],
    [[1260, 75], [1250, 20]],
    [[1320, 90], [1315, 180]],
    [[1388, 125], [1303, 215], [1350, 240]],
    [[1388, 125], [1340, 20]],
    [[1174, 198], [1165, 240], [1128, 258]],
  ].map(z10),
  ...[
    [[290, 110], [300, 125], [335, 118], [345, 190], [375, 280]],
    [[345, 190], [385, 210], [393, 237], [420, 245], [455, 245], [465, 228]],
    [[360, 240], [393, 237], [410, 280]],
    [[455, 245], [460, 280]],
    [[345, 200], [360, 280]],
    [[643, 245], [660, 280]],
    [[855, 280], [905, 265], [970, 210], [960, 170], [985, 205], [1045, 170], [1085, 160], [1100, 185], [1110, 228], [1170, 270]],
    [[970, 210], [982, 280]],
    [[1110, 228], [1110, 280]],
    [[1175, 280], [1205, 255]],
    [[1235, 265], [1237, 280]],
    [[1268, 280], [1270, 240], [1280, 222]],
    [[1285, 240], [1295, 260], [1285, 280]],
    [[1335, 280], [1340, 230]],
    [[1357, 225], [1375, 280]],
  ].map(z11),
  parse("1437,320 1441,333 1437,345"),
  parse("1437,347 1450,347"),
  parse("1437,405 1456,403"),
  parse("1437,512 1445,512 1448,540"),
  parse("580,470 555,490 548,495"),
  parse("580,490 560,485"),
  parse("580,530 555,545"),
  parse("580,475 565,465 560,440 580,440"),
  parse("580,575 570,565 580,555"),
]

const dots = [
  ...z10([
    [115, 50], [165, 68], [135, 95], [90, 155], [43, 228], [153, 222], [303, 230], [297, 275],
    [237, 38], [270, 43], [307, 38], [245, 62], [232, 72], [267, 72], [347, 20], [345, 75],
    [875, 33], [778, 138], [898, 155], [795, 263], [1005, 87], [1100, 30], [1260, 75],
    [1388, 125], [1090, 195], [1174, 198], [1128, 258], [1303, 218],
  ]),
  ...z11([
    [335, 117], [393, 237], [643, 245], [1100, 185], [1110, 228], [1175, 270], [903, 270],
  ]),
]

const CentralEurope = () => (
  <svg width="1333" height="892" viewBox="346 88 1333 892">
    {countries.map((f, i) => (
      <polygon key={i} points={rough(f.pts)} fill={f.c} stroke="#b4b4b4" strokeWidth="1" />
    ))}
    <polyline points="671,143 669,150 667,170" fill="none" stroke="#b0b0b0" strokeWidth="1.5" />
    <polyline points="1190,170 1209,185" fill="none" stroke="#b0b0b0" strokeWidth="1.5" />
    {roads.map((r, i) => (
      <polyline key={i} points={smooth(r)} fill="none" stroke="#bf141c" strokeWidth="1" />
    ))}
    {dots.map(([x, y], i) => (
      <circle key={i} cx={x} cy={y} r="4" fill="#98006e" stroke="#1a0012" strokeWidth="1" />
    ))}
    <MapLabel x="662" y="826">SWITZERLAND</MapLabel>
    <MapLabel x="1002" y="870">SLOVENIA</MapLabel>
  </svg>
)

/* ---------- data ---------- */
const menus = [
  ["P", "r", "oject"], ["", "E", "dit"], ["", "V", "iew"], ["", "L", "ayer"], ["", "S", "ettings"],
  ["", "P", "lugins"], ["Vect", "o", "r"], ["", "R", "aster"], ["", "D", "atabase"], ["", "W", "eb"], ["", "H", "elp"],
]

const TickBox = ({ mr }) => (
  <Check $mr={mr}>
    <svg width="12" height="12" viewBox="0 0 12 12">
      <path d="M2 6l3 3.5L10.5 2" fill="none" stroke="#0c0c0c" strokeWidth="2" />
    </svg>
  </Check>
)

const Tool = ({ name, w, active }) => (
  <ToolButton $w={w} $active={active}>
    <Icon>{icons[name]}</Icon>
  </ToolButton>
)

const sideTop = ["pencils", "pencil", "save", "vertex", "moveFeat", "nodeTool", "deleteSel", "scissors", "copy", "paste"]
const sideBottom = ["undo", "redo", "rotate", "offset", "ring", "part", "fill", "ringDel", "partDel", "reshape", "simplify", "split", "splitParts"]

const Group = ({ h, name }) => (
  <TreeRow $h={h} $pad={7} $bold>
    <Expander />
    <TickBox />
    <NodeIcon><Icon s={14}>{icons.group}</Icon></NodeIcon>
    {name}
  </TreeRow>
)
const Layer = ({ h, name, icon }) => (
  <TreeRow $h={h} $pad={27}>
    <Expander />
    <TickBox />
    <NodeIcon><Icon s={14}>{icons[icon]}</Icon></NodeIcon>
    {name}
  </TreeRow>
)
const Class = ({ h, name, c }) => (
  <TreeRow $h={h} $pad={62}>
    <Swatch $c={c} />
    {name}
  </TreeRow>
)

export default function App() {
  return (
    <Root>
      <GlobalStyle />
      <Header>
        <WindowTitle>
          <TitleArrow />
          QGIS 2.2.99-Valmiera (ppa:imincik) - Countries of Central Europe
          <TitleControls><span>–</span><span>+</span><span>×</span></TitleControls>
        </WindowTitle>
        <MenuBar>
          {menus.map(([a, k, b]) => (
            <MenuItem key={a + k + b}>{a}<u>{k}</u>{b}</MenuItem>
          ))}
        </MenuBar>
        <MainToolbar>
          <Grip><i /><i /><i /></Grip>
          <ToolButton $w={34} $active><Hand size={24} color="#000" fill="#fff" strokeWidth={1.8} /></ToolButton>
          <Tool name="panSel" />
          <Tool name="zoomIn" />
          <Tool name="zoomOut" />
          <Tool name="zoomOne" />
          <Spacer $w={2} />
          <Tool name="zoomFull" />
          <Tool name="zoomSel" />
          <Tool name="zoomLayer" />
          <Tool name="zoomLast" />
          <Tool name="zoomNext" />
          <Tool name="refresh" />
          <Grip $w={12}><i /><i /><i /></Grip>
          <Tool name="identify" />
          <Tool name="action" />
          <DropArrow $w={20} />
          <Spacer $w={1} />
          <Tool name="select" />
          <DropArrow />
          <Spacer $w={2} />
          <Tool name="deselect" />
          <Tool name="expression" />
          <Tool name="table" />
          <Tool name="stats" />
          <Tool name="measure" />
          <DropArrow $dark />
          <Tool name="tips" />
          <Spacer $w={2} />
          <Tool name="annotNew" />
          <Tool name="annotMove" />
          <Tool name="textAnnot" />
          <DropArrow $dark />
          <Grip $w={14}><i /><i /><i /></Grip>
          <Tool name="gislab" />
        </MainToolbar>
      </Header>

      <Middle>
        <SideBar>
          <SideGrip $h={11}><i /><i /><i /></SideGrip>
          {sideTop.map((n, i) => (
            <SideButton key={n}>
              <Icon>{icons[n]}</Icon>
              {i === 0 && <SideDrop />}
            </SideButton>
          ))}
          <SideGrip $h={12}><i /><i /><i /></SideGrip>
          {sideBottom.map((n) => (
            <SideButton key={n}><Icon>{icons[n]}</Icon></SideButton>
          ))}
          <Chevrons>
            <svg width="10" height="10" viewBox="0 0 10 10">
              <path d="M1 1l4 3 4-3M1 6l4 3 4-3" fill="none" stroke="#111" strokeWidth="1.6" />
            </svg>
          </Chevrons>
        </SideBar>

        <Dock>
          <DockHead>
            <DockTitle>Layers</DockTitle>
            <DockBtn>▫</DockBtn>
            <DockBtn>×</DockBtn>
          </DockHead>
          <Tree>
            <Group h={20} name="Places and roads" />
            <Layer h={22} name="Places" icon="points" />
            <TreeRow $h={17} $pad={62}>
              <svg width="16" height="16" viewBox="0 0 16 16">
                <circle cx="8" cy="8" r="3.8" fill="#98006e" stroke="#1a0012" />
              </svg>
            </TreeRow>
            <Layer h={22} name="Roads" icon="line" />
            <TreeRow $h={18} $pad={62}>
              <svg width="16" height="2" viewBox="0 0 16 2">
                <path d="M0 1h16" stroke="#c1141c" strokeWidth="1.2" />
              </svg>
            </TreeRow>
            <Group h={20} name="Countries" />
            <Layer h={21} name="Visegrad Four" icon="polygon" />
            <Class h={19} name="Czech Rep." c="#b30000" />
            <Class h={19} name="Hungary" c="#e34a33" />
            <Class h={19} name="Poland" c="#fc8d59" />
            <Class h={19} name="Slovakia" c="#fdcc8a" />
            <Layer h={21} name="Western Countries" icon="polygon" />
            <Class h={19} name="Austria" c="#3f007d" />
            <Class h={19} name="Germany" c="#6a51a3" />
            <Class h={19} name="Liechtenstein" c="#9e9ac8" />
            <Class h={19} name="Switzerland" c="#dadaeb" />
            <Layer h={21} name="Other" icon="polygon" />
            <Class h={19} name="Slovenia" c="#41d35c" />
          </Tree>
        </Dock>
        <Splitter />
        <MapCanvas><CentralEurope /></MapCanvas>
      </Middle>

      <StatusBar>
        <StatusIcon><Icon s={18}>{icons.messages}</Icon></StatusIcon>
        <StatusText $ml={9}>Coordinate:</StatusText>
        <CoordBox $ml={12}>1552961,7492288</CoordBox>
        <StatusText $ml={10}>Scale</StatusText>
        <ScaleCombo $ml={15}>
          <span>1:8,160,200</span>
          <ScaleBtn />
        </ScaleCombo>
        <StatusIcon $ml={9}><Icon s={18}>{icons.noRender}</Icon></StatusIcon>
        <StatusIcon $ml={9}><TickBox mr={0} /></StatusIcon>
        <StatusText $ml={6}>Render</StatusText>
        <StatusText $ml={16}>EPSG:3857</StatusText>
        <StatusIcon $ml={11}><Icon s={17}>{icons.globe}</Icon></StatusIcon>
        <StatusIcon $ml={9}><Icon s={17}>{icons.warning}</Icon></StatusIcon>
      </StatusBar>

      <Dialog>
        <DialogTitle>
          <DialogArrow />
          Publish in GIS.lab Web
          <DialogClose>
            <svg width="10" height="10" viewBox="0 0 10 10">
              <path d="M1 1l8 8M9 1l-8 8" stroke="#777" strokeWidth="1.8" />
            </svg>
          </DialogClose>
        </DialogTitle>
        <DialogBody>
          <TabBar>
            <Tab $w={78}>Base layer</Tab>
            <Tab $w={57}>Layers</Tab>
            <Tab $w={56} $active>Project</Tab>
          </TabBar>
          <Pane>
            <FormArea>
              <Row $pad={9}>
                <FieldLabel>Title</FieldLabel>
                <TextField $w={556}>Countries of Central Europe</TextField>
              </Row>
              <GroupBox $mt={17} $pt={18} $pb={11}>
                <Legend>Extent/Scales</Legend>
                <Fields $gap={8}>
                  <Row>
                    <FieldLabel>Project extent by layer</FieldLabel>
                    <Combo>All layers<UpDown /></Combo>
                  </Row>
                  <Row>
                    <FieldLabel>Extent buffer</FieldLabel>
                    <FieldWithButton><span>0.00</span><SpinButton /></FieldWithButton>
                  </Row>
                  <Row>
                    <FieldLabel>Minimum scale</FieldLabel>
                    <Combo>1:500<UpDown /></Combo>
                  </Row>
                  <Row>
                    <FieldLabel>Maximum scale</FieldLabel>
                    <Combo>1:10000000<UpDown /></Combo>
                  </Row>
                </Fields>
              </GroupBox>
              <GroupBox $mt={27} $pt={17} $pb={12}>
                <Legend>Messages</Legend>
                <Fields $gap={7}>
                  <Row $h={67}>
                    <FieldLabel $top>Text</FieldLabel>
                    <TextArea />
                  </Row>
                  <Row>
                    <FieldLabel>Valid until</FieldLabel>
                    <FieldWithButton><span>7/8/15</span><DateButton /></FieldWithButton>
                  </Row>
                </Fields>
              </GroupBox>
              <GroupBox $mt={26} $pt={10} $pb={30} $minH={60}>
                <Legend>Access constraints</Legend>
              </GroupBox>
            </FormArea>
            <ScrollTrack><ScrollThumb /></ScrollTrack>
          </Pane>
          <Separator />
          <ButtonRow>
            <PushButton disabled>&lt; <u>B</u>ack</PushButton>
            <PushButton><u>N</u>ext &gt;</PushButton>
            <PushButton>Cancel</PushButton>
          </ButtonRow>
        </DialogBody>
      </Dialog>

      <Cursor viewBox="0 0 13 19">
        <path d="M1 1v15l4-3.5 2.5 6 2.5-1-2.5-6h5z" fill="#e6e6e6" stroke="#000" strokeWidth="1.2" />
      </Cursor>
    </Root>
  )
}
